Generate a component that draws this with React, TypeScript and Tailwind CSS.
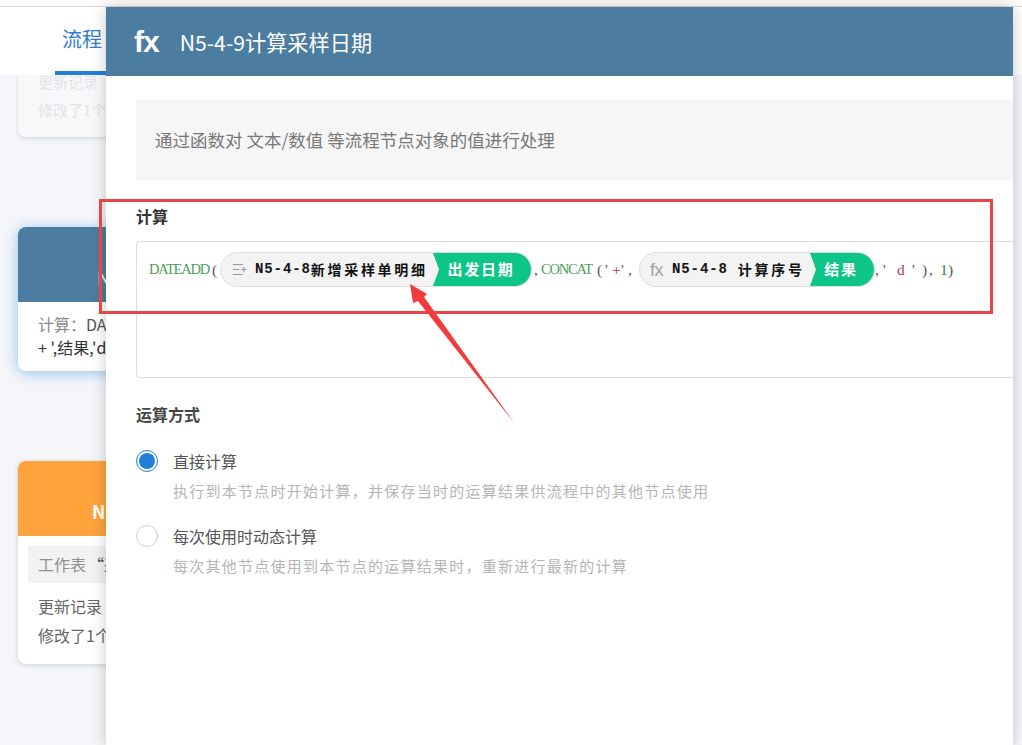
import { ListPlus } from "lucide-react";

const sans = "font-['Noto_Sans_CJK_SC','Noto_Sans',sans-serif]";

interface PillProps {
  icon: React.ReactNode;
  code: string;
  name: string;
  field: string;
  gap: string;
  grayWidth: string;
  greenWidth: string;
}

// 节点字段标签
function Pill({ icon, code, name, field, gap, grayWidth, greenWidth }: PillProps) {
  return (
    <span className="inline-flex h-[35px] shrink-0 items-center overflow-hidden rounded-full border border-[#dedede] bg-[#f3f3f3]">
      <span className={`flex h-full items-center pl-[10px] ${grayWidth}`}>
        {icon}
        <span className="ml-[7px] font-['Liberation_Mono',monospace] text-[14px] font-bold tracking-[0.9px] text-[#111]">{code}</span>
        <span className={`${gap} ${sans} text-[14px] font-bold tracking-[2.7px] text-[#111]`}>{name}</span>
      </span>
      <span
        className={`-ml-[8px] flex h-full items-center justify-center bg-[#0cc586] pl-[2px] pr-[4px] text-[15px] font-bold tracking-[1.7px] text-white [clip-path:polygon(0_0,100%_0,100%_100%,0_100%,6px_50%)] ${sans} ${greenWidth}`}
      >
        {field}
      </span>
    </span>
  );
}

export default function App() {
  return (
    <div className={`relative h-[745px] w-[1022px] overflow-hidden bg-[#f5f6fa] ${sans}`}>
      {/* 顶部页签 */}
      <div className="h-[7px] border-b border-[#dcdcdc] bg-[#fffdfb]" />
      <div className="relative z-10 flex h-[68px] bg-white pl-[55px]">
        <div className="flex h-full w-[60px] items-center border-b-[4px] border-[#1f80d8] pl-[7px] text-[20px] text-[#2f7fca]">流程</div>
      </div>

      {/* 画布节点 */}
      <div className="flex flex-col pl-[18px]">
        <div className="-mt-[18px] h-[80px] w-[300px] rounded-b-[8px] bg-[#f8f8fb] pl-[20px] pt-[11px] text-[15px] leading-[28px] text-[#e2e2e6] shadow-[0_2px_4px_rgba(0,0,0,0.12)]">
          <div>更新记录</div>
          <div>修改了1个</div>
        </div>

        <div className="mt-[90px] h-[144px] w-[300px] overflow-hidden rounded-[8px] bg-white shadow-[0_2px_14px_rgba(60,150,230,0.55)]">
          <div className="flex h-[75px] items-center bg-[#4c7da0] pl-[79px] pt-[26px] text-[18px] text-white">N5-4-9</div>
          <div className="pl-[20px] pt-[11px] text-[16px] leading-[23px] text-[#555]">
            <div><span className="text-[#8a8a8a]">计算：</span>DATEADD</div>
            <div className="text-[#333]">+ ',结果,'d</div>
          </div>
        </div>

        <div className="mt-[90px] h-[203px] w-[300px] overflow-hidden rounded-[8px] bg-white shadow-[0_1px_5px_rgba(0,0,0,0.18)]">
          <div className="flex h-[75px] items-center bg-[#ffa43c] pl-[74px] pt-[26px] text-[18px] font-bold text-white">N5-4-8</div>
          <div className="ml-[10px] mt-[10px] flex h-[37px] items-center bg-[#f2f2f2] pb-[2px] pl-[10px] text-[16px] text-[#8f8f8f]">
            工作表<span className="ml-[2px] text-[#444]">“采样单”</span>
          </div>
          <div className="pl-[20px] pt-[9px] text-[16px] leading-[29px] text-[#666]">
            <div>更新记录</div>
            <div>修改了1个字段</div>
          </div>
        </div>
      </div>

      {/* 抽屉 */}
      <div className="absolute bottom-0 left-[106px] top-[7px] z-20 flex w-[907px] flex-col bg-white shadow-[0_0_14px_rgba(0,0,0,0.22)]">
        <div className="flex h-[69px] shrink-0 items-center bg-[#4c7da0] pl-[28px] text-white">
          <span className="font-['Liberation_Sans',sans-serif] text-[30px] font-bold leading-none tracking-[-1px]">fx</span>
          <span className="ml-[21px] text-[21.2px] leading-none">N5-4-9计算采样日期</span>
        </div>

        <div className="flex flex-col pl-[30px]">
          <div className="mt-[24px] flex h-[80px] items-center bg-[#f6f6f7] pl-[19px] text-[17.5px] text-[#777]">
            通过函数对 文本/数值 等流程节点对象的值进行处理
          </div>

          <div className="mt-[26px] text-[16px] font-bold leading-[20px] text-[#333]">计算</div>

          <div className="mt-[15px] flex h-[137px] items-start rounded-l-[4px] border-y border-l border-[#dddddd] pl-[12px] pt-[10px]">
            <div className="flex h-[35px] items-center font-['Liberation_Serif',serif] text-[15.5px] text-[#555]">
              <span className="w-[63px] text-[14.5px] tracking-[-1.2px] text-[#4ca05a]">DATEADD</span>
              <span className="w-[8px]">(</span>
              <Pill
                icon={<ListPlus size={17} strokeWidth={1.5} className="text-[#9a9a9a]" />}
                code="N5-4-8"
                name="新增采样单明细"
                field="出发日期"
                gap="ml-0"
                grayWidth="w-[220px]"
                greenWidth="w-[98px]"
              />
              <span className="ml-[2px] w-[7px]">,</span>
              <span className="w-[53px] text-[14.5px] tracking-[-1.2px] text-[#4ca05a]">CONCAT</span>
              <span className="ml-[3px] w-[8px]">(</span>
              <span className="w-[7px]">'</span>
              <span className="w-[9px] text-[#b0404a]">+</span>
              <span className="w-[7px]">'</span>
              <span className="w-[11px]">,</span>
              <Pill
                icon={<span className="w-[15px] font-['Liberation_Sans',sans-serif] text-[18px] leading-none tracking-[-0.5px] text-[#a0a0a0]">fx</span>}
                code="N5-4-8"
                name="计算序号"
                field="结果"
                gap="ml-[10px]"
                grayWidth="w-[178px]"
                greenWidth="w-[64px]"
              />
              <span className="w-[8px]">,</span>
              <span className="w-[14px]">'</span>
              <span className="w-[15px] text-[#b0404a]">d</span>
              <span className="w-[10px]">'</span>
              <span className="w-[7px]">)</span>
              <span className="w-[11px]">,</span>
              <span className="w-[8px] text-[#2f7d5a]">1</span>
              <span>)</span>
            </div>
          </div>

          <div className="mt-[26px] text-[16px] font-bold leading-[20px] text-[#444]">运算方式</div>

          <div className="mt-[24px] flex items-start gap-[15px]">
            <span className="mt-[2px] flex h-[22px] w-[22px] shrink-0 items-center justify-center rounded-full border border-[#1f80d8]">
              <span className="h-[16px] w-[16px] rounded-full bg-[#1f80d8]" />
            </span>
            <div>
              <div className="text-[16px] leading-[26px] text-[#555]">直接计算</div>
              <div className="mt-[4px] text-[15px] leading-[26px] tracking-[1.25px] text-[#b5b5b5]">执行到本节点时开始计算，并保存当时的运算结果供流程中的其他节点使用</div>
            </div>
          </div>

          <div className="mt-[19px] flex items-start gap-[15px]">
            <span className="mt-[2px] h-[22px] w-[22px] shrink-0 rounded-full border border-[#d0d0d0]" />
            <div>
              <div className="text-[16px] leading-[26px] text-[#555]">每次使用时动态计算</div>
              <div className="mt-[4px] text-[15px] leading-[26px] tracking-[1.25px] text-[#b5b5b5]">每次其他节点使用到本节点的运算结果时，重新进行最新的计算</div>
            </div>
          </div>
        </div>
      </div>

      {/* 标注 */}
      <div className="absolute left-[99px] top-[199px] z-30 h-[115px] w-[894px] border-[3px] border-[#e94545]" />
      <svg className="absolute left-0 top-0 z-30" width="1022" height="745" viewBox="0 0 1022 745">
        <polygon points="410,284 427,294 424,297 515,424 418,301 413,303" fill="#f23c3c" />
      </svg>
    </div>
  );
}
